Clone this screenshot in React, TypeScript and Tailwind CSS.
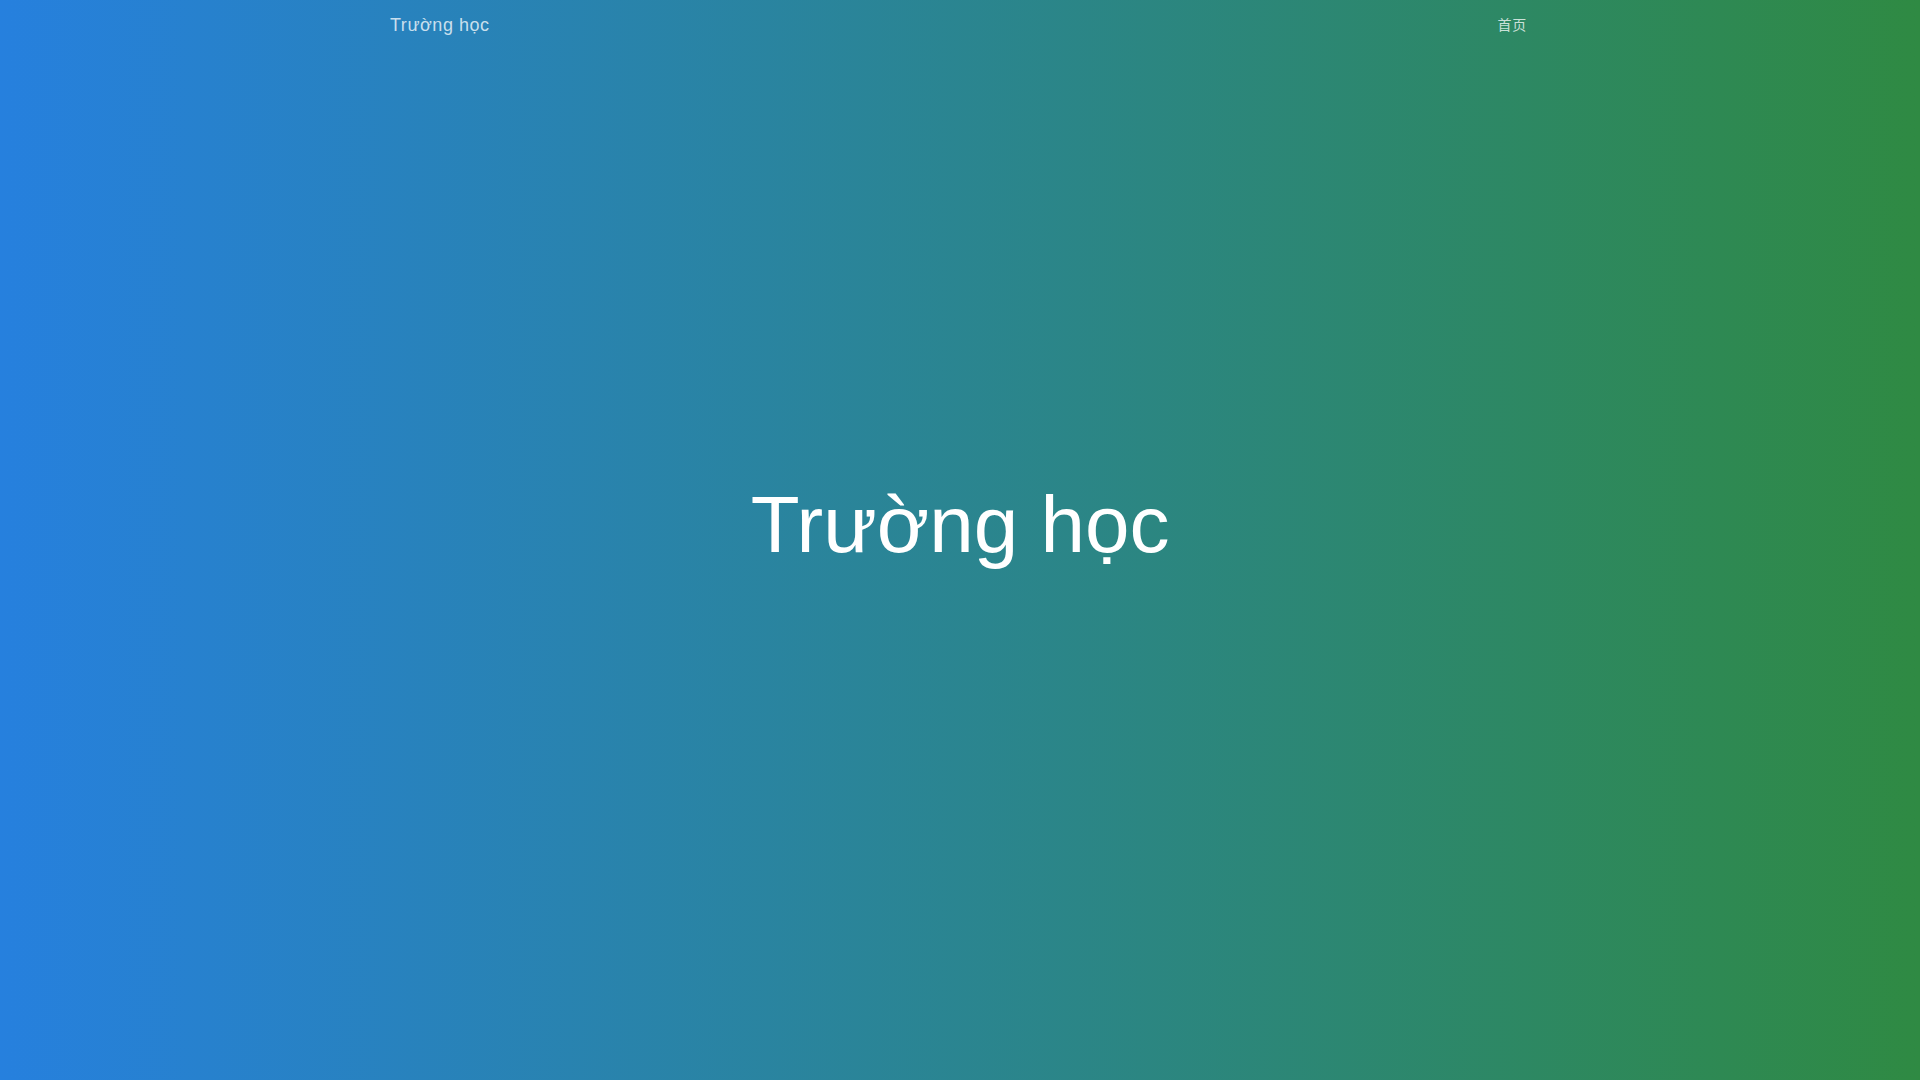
export default function App() {
  return (
    <div
      className="relative h-screen w-full overflow-hidden bg-[linear-gradient(to_right,#2680de,#2f8a43)] text-white"
      style={{ fontFamily: '"Liberation Sans", Arial, "Noto Sans CJK SC", sans-serif' }}
    >
      <header className="absolute inset-x-0 top-0">
        <div className="mx-auto flex h-[50px] max-w-[1140px] items-center justify-between">
          <a className="text-[18px] tracking-[0.03em] text-white/75">Trường học</a>
          <nav className="pr-[3px] text-[14px] tracking-[0.05em] text-white/75">首页</nav>
        </div>
      </header>

      <main className="flex h-full items-center justify-center">
        <h1 className="mb-[30px] text-[80px] leading-tight font-normal">Trường học</h1>
      </main>
    </div>
  );
}
